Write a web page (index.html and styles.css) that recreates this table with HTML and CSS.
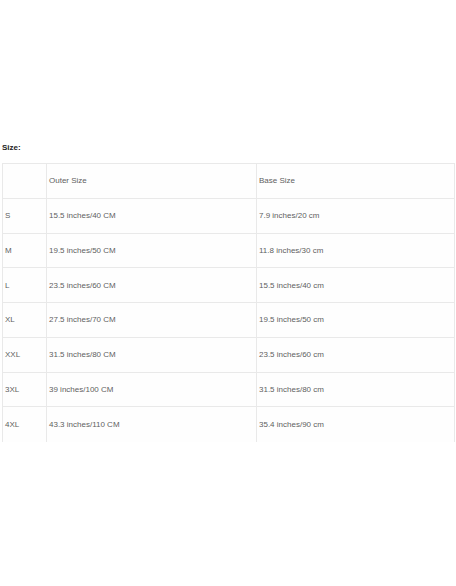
FILE: index.html
```html
<!DOCTYPE html>
<html>
<head>
<meta charset="utf-8">
<link rel="stylesheet" href="styles.css">
</head>
<body>
<div class="page">
  <p class="title">Size:</p>
  <table class="sizes">
    <colgroup>
      <col class="c1"><col class="c2"><col class="c3">
    </colgroup>
    <tr><td></td><td>Outer Size</td><td>Base Size</td></tr>
    <tr><td>S</td><td>15.5 inches/40 CM</td><td>7.9 inches/20 cm</td></tr>
    <tr><td>M</td><td>19.5 inches/50 CM</td><td>11.8 inches/30 cm</td></tr>
    <tr><td>L</td><td>23.5 inches/60 CM</td><td>15.5 inches/40 cm</td></tr>
    <tr><td>XL</td><td>27.5 inches/70 CM</td><td>19.5 inches/50 cm</td></tr>
    <tr><td>XXL</td><td>31.5 inches/80 CM</td><td>23.5 inches/60 cm</td></tr>
    <tr><td>3XL</td><td>39 inches/100 CM</td><td>31.5 inches/80 cm</td></tr>
    <tr class="last"><td>4XL</td><td>43.3 inches/110 CM</td><td>35.4 inches/90 cm</td></tr>
  </table>
</div>
</body>
</html>
```
FILE: styles.css
```css
html, body {
  margin: 0;
  padding: 0;
  background: #ffffff;
}
.page {
  padding: 142px 2px 0 2px;
  font-family: "Liberation Sans", Arial, sans-serif;
}
.title {
  margin: 0 0 10px 0;
  font-size: 8px;
  line-height: 11px;
  font-weight: bold;
  color: #222;
}
.sizes {
  width: 452px;
  border-collapse: collapse;
  table-layout: fixed;
}
.c1 { width: 44px; }
.c2 { width: 210px; }
.c3 { width: 198px; }
.sizes td {
  border: 1px solid #e9e9e9;
  height: 34.75px;
  padding: 0 0 0 2px;
  box-sizing: border-box;
  font-size: 8px;
  color: #5e5e5e;
  vertical-align: middle;
  background: #fefefe;
}
.sizes tr.last td {
  border-bottom: none;
}
```
